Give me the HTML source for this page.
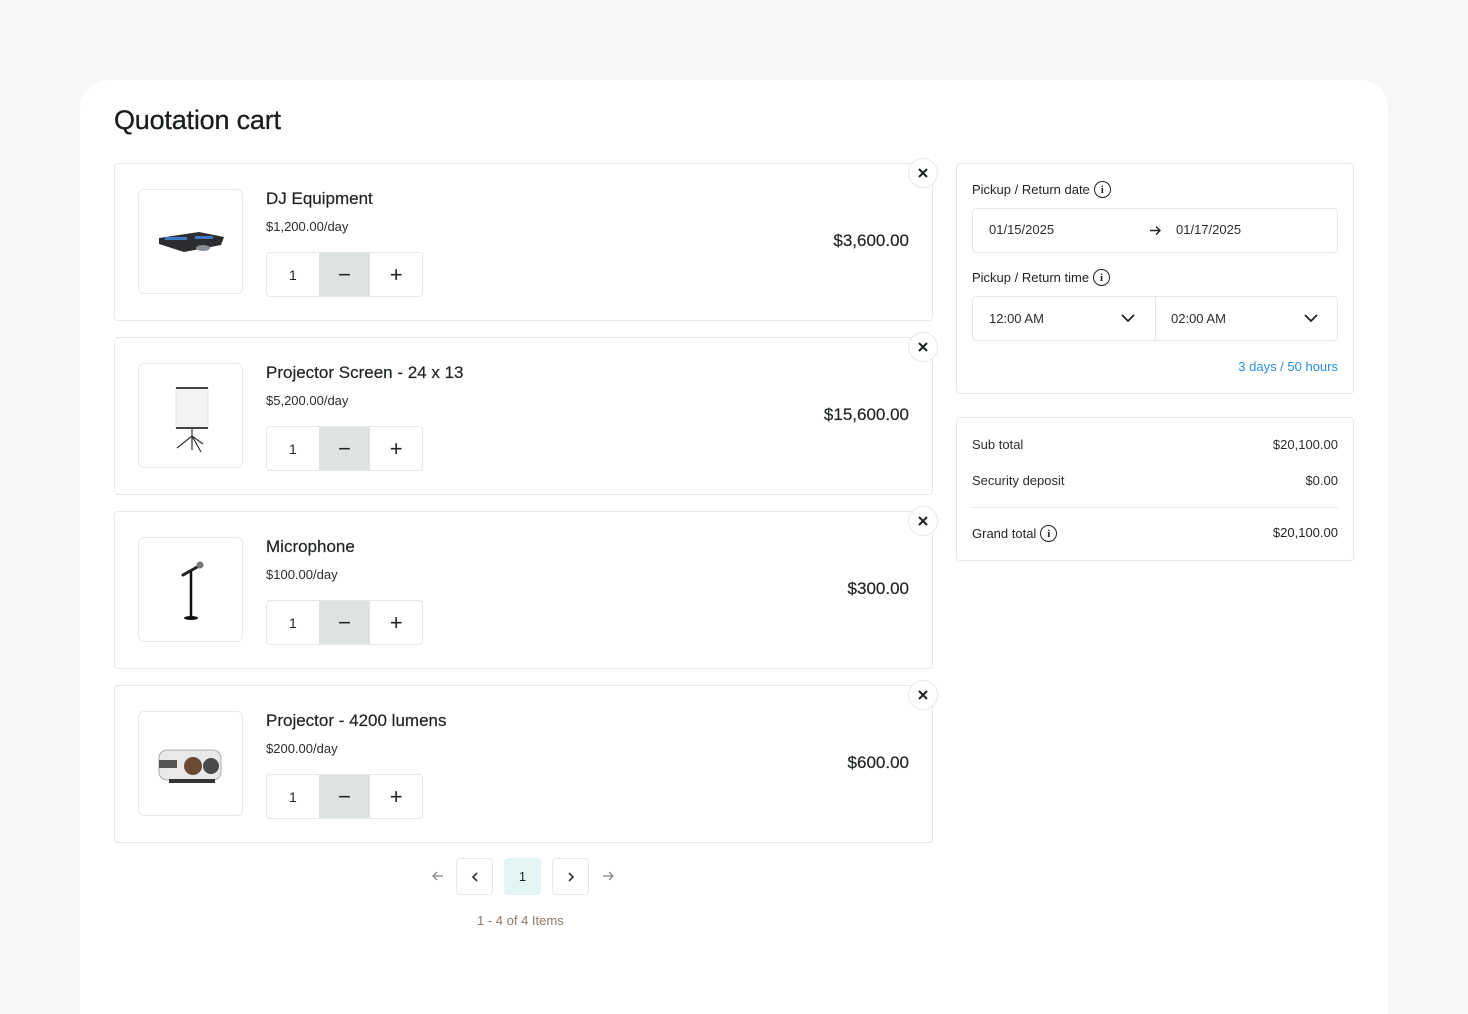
<!DOCTYPE html>
<html><head><meta charset="utf-8">
<style>
*{box-sizing:border-box;margin:0;padding:0}
html,body{width:1468px;height:1014px;overflow:hidden}
body{background:#f6f7f6;font-family:"Liberation Sans",sans-serif;color:#1f2324;position:relative}
.main{position:absolute;left:80px;top:80px;width:1308px;height:934px;background:#fff;border-radius:28px 28px 0 0}
.abs{position:absolute}
h1{position:absolute;left:114px;top:105px;font-size:27px;font-weight:400;letter-spacing:-0.2px;color:#1a1d1e;-webkit-text-stroke:0.3px #1a1d1e}
.item{position:absolute;left:114px;width:819px;height:158px;border:1px solid #e6e9e8;border-radius:4px;background:#fff}
.img{position:absolute;left:23px;top:25px;width:105px;height:105px;border:1px solid #e8eaea;border-radius:6px;overflow:hidden}
.name{position:absolute;left:151px;top:25px;font-size:17px;color:#1f2324;-webkit-text-stroke:0.2px #1f2324}
.rate{position:absolute;left:151px;top:55px;font-size:13px;color:#2a2e2f}
.qty{position:absolute;left:151px;top:88px;width:157px;height:45px;border:1px solid #e5e8e8;border-radius:4px;overflow:hidden;display:flex}
.qty div{width:52px;height:100%;display:flex;align-items:center;justify-content:center;font-size:14px}
.qty .m{background:#dde3e3;font-size:22px}
.qty .p{font-size:22px}
.total{position:absolute;right:23px;top:67px;font-size:17px;color:#1f2324;-webkit-text-stroke:0.2px #1f2324}
.x{position:absolute;left:793px;top:-6px;width:30px;height:30px;border-radius:50%;border:1px solid #e6e9e8;background:#fff;display:flex;align-items:center;justify-content:center}
.panel{position:absolute;left:956px;width:398px;border:1px solid #e6e9e8;border-radius:4px;background:#fff}
.lbl{position:absolute;left:15px;font-size:13px;color:#1f2324;display:flex;align-items:center;gap:4px}
.info{width:17px;height:17px;border:1.5px solid #1f2324;border-radius:50%;display:inline-flex;align-items:center;justify-content:center;font-size:11px;font-weight:700;font-family:"Liberation Serif",serif}
.inp{position:absolute;left:15px;width:366px;height:45px;border:1px solid #e6e9e8;border-radius:4px;font-size:13px;color:#2a2e2f}
.row{position:absolute;left:15px;right:15px;font-size:13px;display:flex;justify-content:space-between;color:#2a2e2f}
.pg{position:absolute;top:858px;width:37px;height:37px;border:1px solid #e8eaea;border-radius:4px;display:flex;align-items:center;justify-content:center;font-size:13px}
</style></head><body>
<div class="main"></div>
<h1>Quotation cart</h1>

<div class="item" style="top:163px">
 <div class="img"><svg width="105" height="105"><polygon points="20,48 60,42 85,47 82,55 45,62 20,54" fill="#2b2d30"/><rect x="26" y="47" width="22" height="3" fill="#3f78c8"/><rect x="56" y="46" width="18" height="3" fill="#3f78c8"/><ellipse cx="64" cy="58" rx="7" ry="3" fill="#8a8f95"/></svg></div>
 <div class="name">DJ Equipment</div><div class="rate">$1,200.00/day</div>
 <div class="qty"><div>1</div><div class="m">−</div><div class="p">+</div></div>
 <div class="total">$3,600.00</div>
 <div class="x"><svg width="12" height="12"><path d="M2 2L10 10M10 2L2 10" stroke="#1f2324" stroke-width="2"/></svg></div>
</div>

<div class="item" style="top:337px">
 <div class="img"><svg width="105" height="105"><rect x="37" y="24" width="32" height="40" fill="#f3f4f4" stroke="#ccc" stroke-width=".5"/><rect x="37" y="23" width="32" height="2" fill="#444"/><rect x="37" y="63" width="32" height="2" fill="#444"/><path d="M53 65V86M53 72L38 84M53 72L62 88M53 72L64 80" stroke="#333" stroke-width="1.2" fill="none"/></svg></div>
 <div class="name">Projector Screen - 24 x 13</div><div class="rate">$5,200.00/day</div>
 <div class="qty"><div>1</div><div class="m">−</div><div class="p">+</div></div>
 <div class="total">$15,600.00</div>
 <div class="x"><svg width="12" height="12"><path d="M2 2L10 10M10 2L2 10" stroke="#1f2324" stroke-width="2"/></svg></div>
</div>

<div class="item" style="top:511px">
 <div class="img"><svg width="105" height="105"><path d="M44 37L60 28" stroke="#222" stroke-width="3" stroke-linecap="round"/><circle cx="61" cy="27" r="3.5" fill="#777"/><path d="M52 33V80" stroke="#111" stroke-width="2.5"/><ellipse cx="52" cy="80" rx="7" ry="2" fill="#111"/></svg></div>
 <div class="name">Microphone</div><div class="rate">$100.00/day</div>
 <div class="qty"><div>1</div><div class="m">−</div><div class="p">+</div></div>
 <div class="total">$300.00</div>
 <div class="x"><svg width="12" height="12"><path d="M2 2L10 10M10 2L2 10" stroke="#1f2324" stroke-width="2"/></svg></div>
</div>

<div class="item" style="top:685px">
 <div class="img"><svg width="105" height="105"><rect x="20" y="38" width="62" height="30" rx="8" fill="#e8e9ea" stroke="#999" stroke-width=".8"/><rect x="20" y="48" width="18" height="8" fill="#555"/><circle cx="54" cy="54" r="9" fill="#6b4a35"/><circle cx="72" cy="54" r="8" fill="#4a4a4a"/><rect x="30" y="67" width="46" height="4" fill="#333"/></svg></div>
 <div class="name">Projector - 4200 lumens</div><div class="rate">$200.00/day</div>
 <div class="qty"><div>1</div><div class="m">−</div><div class="p">+</div></div>
 <div class="total">$600.00</div>
 <div class="x"><svg width="12" height="12"><path d="M2 2L10 10M10 2L2 10" stroke="#1f2324" stroke-width="2"/></svg></div>
</div>

<svg class="abs" style="left:431px;top:870px" width="14" height="12"><path d="M12 6H2M6 2L2 6L6 10" stroke="#888" stroke-width="1.3" fill="none"/></svg>
<div class="pg" style="left:456px"><svg width="10" height="12"><path d="M7 2L3 6L7 10" stroke="#333" stroke-width="1.6" fill="none"/></svg></div>
<div class="pg" style="left:504px;background:#e2f4f3;border-color:#e2f4f3">1</div>
<div class="pg" style="left:552px"><svg width="10" height="12"><path d="M3 2L7 6L3 10" stroke="#333" stroke-width="1.6" fill="none"/></svg></div>
<svg class="abs" style="left:601px;top:870px" width="14" height="12"><path d="M2 6H12M8 2L12 6L8 10" stroke="#888" stroke-width="1.3" fill="none"/></svg>
<div class="abs" style="left:477px;top:913px;font-size:13px;color:#8a7a66">1 - 4 of 4 Items</div>

<div class="panel" style="top:163px;height:231px">
 <div class="lbl" style="top:17px">Pickup / Return date <span class="info">i</span></div>
 <div class="inp" style="top:44px"><span class="abs" style="left:16px;top:13px">01/15/2025</span><svg class="abs" style="left:176px;top:16px" width="12" height="11"><path d="M1 5.5H11M7 1.5L11 5.5L7 9.5" stroke="#1f2324" stroke-width="1.4" fill="none"/></svg><span class="abs" style="left:203px;top:13px">01/17/2025</span></div>
 <div class="lbl" style="top:105px">Pickup / Return time <span class="info">i</span></div>
 <div class="inp" style="top:132px"><span class="abs" style="left:16px;top:14px">12:00 AM</span><svg class="abs" style="left:148px;top:16px" width="14" height="10"><path d="M1 2L7 8L13 2" stroke="#1f2324" stroke-width="1.8" fill="none"/></svg><div class="abs" style="left:182px;top:0;width:1px;height:43px;background:#e6e9e8"></div><span class="abs" style="left:198px;top:14px">02:00 AM</span><svg class="abs" style="left:331px;top:16px" width="14" height="10"><path d="M1 2L7 8L13 2" stroke="#1f2324" stroke-width="1.8" fill="none"/></svg></div>
 <div class="abs" style="right:15px;top:195px;font-size:13px;color:#2b8fe0">3 days / 50 hours</div>
</div>

<div class="panel" style="top:417px;height:144px">
 <div class="row" style="top:19px"><span>Sub total</span><span>$20,100.00</span></div>
 <div class="row" style="top:55px"><span>Security deposit</span><span>$0.00</span></div>
 <div class="abs" style="left:15px;right:15px;top:89px;height:1px;background:#e8eaea"></div>
 <div class="row" style="top:107px;color:#1f2324"><span style="display:flex;align-items:center;gap:4px">Grand total <span class="info">i</span></span><span>$20,100.00</span></div>
</div>
</body></html>
